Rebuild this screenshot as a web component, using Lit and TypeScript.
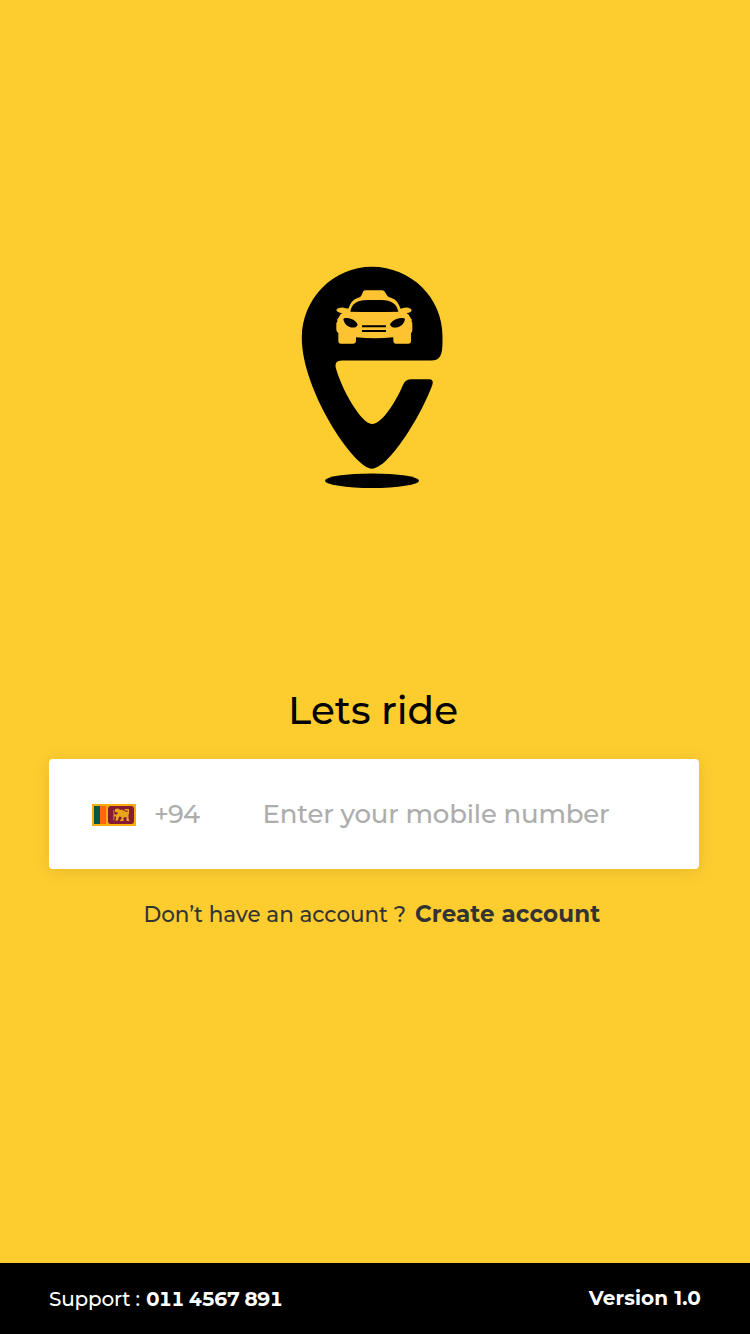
import { LitElement, html, css } from "lit";
import { customElement } from "lit/decorators.js";

@customElement("ride-logo")
class RideLogo extends LitElement {
  static styles = css`
    :host { display: block; width: 146px; height: 226px; }
    svg { display: block; }
  `;
  render() {
    return html`<svg width="146" height="226" viewBox="300 264 146 226">
      <path d="M372 266.8C411 266.8 442.5 298 442.5 336V341C442.5 355 440.5 360.6 431 360.6H342C336.500 360.600 334.600 363.500 336 368.500C342 390 361.500 424 372 424C382.500 424 396.500 400 402.500 386Q405 379.300 410.500 379.300H429Q434.200 379.300 432.300 385C421 416 388.500 468.700 372 468.700C354 468.700 301.800 390 301.800 338C301.800 299 333 266.800 372 266.800Z"/>
      <ellipse cx="372" cy="480.700" rx="47" ry="7.300"/>
      <g transform="translate(325 280) scale(.33333)">
        <path fill="#fdc331" d="M108 49L115 34Q117 31 123 31H170Q175 31 178 34L188 49Q192 52 200 54C213 59 221 69 226 85Q227 87 232 85Q239 82 250 83Q259 85 260 90Q259 98 246 99H244Q252 102 255 112L260 118V125Q263 127 262 133V149Q262 157 258 159V184Q258 191 251 191H212Q206 191 205 184V172Q149 178 93 172V184Q92 191 85 191H47Q40 191 40 184V159Q35 156 34 149V133Q33 127 37 125V118L42 112Q45 101 53 99H50Q37 98 34 90Q36 84 46 83Q56 82 62 85Q69 87 71 84C76 69 84 59 97 54Q105 52 108 49Z"/>
        <path d="M76 95C80 70 98 60 126 60H169C199 60 215 72 220 95Q148 97 76 95Z"/>
        <path d="M55 117C62 109 94 118 98 134C93 149 59 145 55 117ZM240 117C233 109 200 118 195 134C201 149 236 145 240 117Z"/>
        <path d="M111 136H183V142H111ZM111 150H183V156H111Z"/>
      </g>
    </svg>`;
  }
}

@customElement("lanka-flag")
class LankaFlag extends LitElement {
  static styles = css`
    :host { display: block; width: 44px; height: 22px; }
    svg { display: block; }
  `;
  render() {
    return html`<svg width="44" height="22" viewBox="0 0 44 22">
      <path fill="#f9ae0c" d="M0 0H44V22H0Z"/>
      <path fill="#045846" d="M2 2H8V20H2Z"/>
      <path fill="#ff650d" d="M8 2H14V20H8Z"/>
      <path fill="#861c33" d="M16 2H42V20H16Z"/>
      <path fill="#d5891e" d="M16 2H18L16 4ZM42 2V4L40 2ZM16 20V18L18 20ZM42 20H40L42 18Z"/>
      <path fill="#e9a51e" d="M23 5L26 4.500L28.500 6L30 5.500L32 7L35.500 8V6.500H32.500V5H37V9.500L36.500 11V14.500L37.500 17H34.500V13L31.500 13.500V17H28V16L29.500 15V13L27 12.500L26 16.500H23L24 15V12.500H22.300V16H21.500V6H22.300V10.500H25L26 8.500L23 8Z"/>
    </svg>`;
  }
}

@customElement("app-root")
class AppRoot extends LitElement {
  static styles = css`
    :host { display: block; }
    .screen {
      box-sizing: border-box; width: 750px; height: 1334px;
      display: flex; flex-direction: column; background: #fdcd30;
      font-family: Montserrat, Inter, sans-serif; color: #000; white-space: nowrap;
    }
    main { flex: 1; display: flex; flex-direction: column; padding: 264px 51px 0 49px; }
    ride-logo { margin-left: 251px; }
    h1 { margin: 192px 0 0 239px; height: 56px; font-size: 39px; line-height: 56px; font-weight: 500; }
    .field {
      display: flex; align-items: center; height: 110px; margin-top: 21px;
      padding: 1px 0 0 43px; box-sizing: border-box; background: #fff;
      border-radius: 4px; box-shadow: 0 2px 16px rgba(90, 70, 0, .14);
      font-size: 26px; font-weight: 500; color: #adadad;
    }
    .code, .hint { padding-bottom: 2px; }
    .code { width: 108.500px; margin-left: 18px; font-size: 25.500px; letter-spacing: -.8px; }
    .hint { letter-spacing: -.17px; }
    .signup { display: flex; align-items: baseline; margin: 31px 0 0 94.500px; height: 30px; color: #333; font-size: 21.500px; }
    .ask { width: 271.500px; font-weight: 500; letter-spacing: -.05px; }
    .create { font-size: 23px; font-weight: 700; letter-spacing: .15px; }
    footer {
      height: 71px; box-sizing: border-box; padding: 0 49px; display: flex;
      align-items: center; justify-content: space-between; background: #000; color: #fff; font-size: 20px;
    }
    .support { display: flex; align-items: baseline; }
    .label { width: 97px; font-weight: 500; letter-spacing: -.2px; }
    .phone, .version { font-weight: 700; }
    .phone { font-size: 19.500px; font-variant-numeric: tabular-nums; letter-spacing: -1.1px; word-spacing: .8px; }
    .version { padding-bottom: 2px; letter-spacing: .15px; }
  `;
  render() {
    return html`<div class="screen">
      <main>
        <ride-logo></ride-logo>
        <h1>Lets ride</h1>
        <div class="field">
          <lanka-flag></lanka-flag>
          <span class="code">+94</span>
          <span class="hint">Enter your mobile number</span>
        </div>
        <div class="signup"><span class="ask">Don’t have an account ?</span><span class="create">Create account</span></div>
      </main>
      <footer>
        <div class="support"><span class="label">Support :</span><span class="phone">011 4567 891</span></div>
        <span class="version">Version 1.0</span>
      </footer>
    </div>`;
  }
}
